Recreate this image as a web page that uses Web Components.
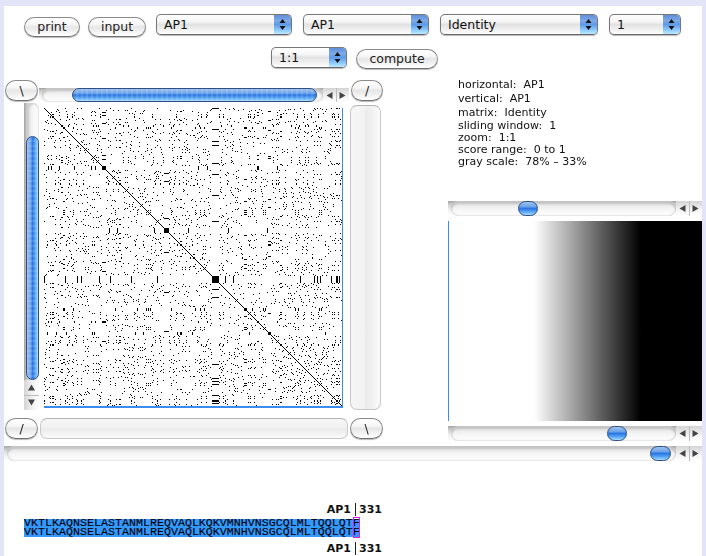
<!DOCTYPE html>
<html>
<head>
<meta charset="utf-8">
<title>Dot plot</title>
<style>
    html, body { margin: 0; height: 100%; overflow: hidden; }
    body { background: #e4e4f8; font-family: "DejaVu Sans", sans-serif; color: #111; }
</style>
</head>
<body>
<dot-app></dot-app>
<script>
class MacButton extends HTMLElement {
    constructor() {
        super();
        this.attachShadow({ mode: 'open' });
        this.shadowRoot.innerHTML = `
            <style>
                :host {
                    display: flex;
                    box-sizing: border-box;
                    align-items: center;
                    justify-content: center;
                    height: 21px;
                    padding-bottom: 1px;
                    border: 1px solid #8a8a8a;
                    border-bottom-color: #6f6f6f;
                    border-radius: 11px;
                    font-size: 12.5px;
                    color: #222;
                    box-shadow: 0 1px 1px #bbb;
                    background: linear-gradient(#fff, #f6f6f6 35%, #e6e6e6 50%, #f2f2f2 75%, #fff);
                    flex: none;
                }
            </style>
            <slot></slot>`;
    }
}

class MacSelect extends HTMLElement {
    constructor() {
        super();
        this.attachShadow({ mode: 'open' });
        this.shadowRoot.innerHTML = `
            <style>
                :host {
                    display: flex;
                    box-sizing: border-box;
                    height: 21px;
                    border: 1px solid #777;
                    border-bottom-color: #666;
                    border-radius: 5px;
                    overflow: hidden;
                    font-size: 12.5px;
                    color: #111;
                    box-shadow: 0 1px 1px #bbb;
                    background: linear-gradient(#fff, #f5f5f5 35%, #e2e2e2 50%, #f2f2f2 80%, #fff);
                    flex: none;
                }
                .label { flex: 1; padding: 0 0 1px 7px; display: flex; align-items: center; }
                .arrows {
                    width: 17px;
                    background: linear-gradient(#5f8fd8, #7ea9e6 30%, #5d9ae8 50%, #9ad4ff 85%, #bfe8ff);
                    display: flex;
                    align-items: center;
                    justify-content: center;
                }
            </style>
            <div class="label"><slot></slot></div>
            <div class="arrows">
                <svg width="7" height="11" viewBox="0 0 7 11"><path d="M3.5 0 6.5 4H.5zM3.5 11 .5 7h6z" fill="#111"/></svg>
            </div>`;
    }
}

class MacScrollbar extends HTMLElement {
    constructor() {
        super();
        this.attachShadow({ mode: 'open' });
    }

    connectedCallback() {
        this.render();
    }

    render() {
        const before = this.getAttribute('before') || 0;
        const size = this.getAttribute('size') || 20;
        const vert = this.getAttribute('orient') === 'v';
        const dir = vert ? 'to right' : 'to bottom';
        // the long thumbs get the faint aqua stripes
        const stripes = size > 40 ? `repeating-linear-gradient(${vert ? 'to bottom' : 'to right'}, transparent 0 3px, rgba(255,255,255,.12) 3px 5px),` : '';
        this.shadowRoot.innerHTML = `
            <style>
                :host {
                    display: flex;
                    box-sizing: border-box;
                    flex-direction: ${vert ? 'column' : 'row'};
                    ${vert ? 'width: 15px;' : 'height: 15px;'}
                    background: linear-gradient(${dir}, #a4a4a4, #cfcfcf 25%, #eee 55%, #fff);
                    flex: none;
                }
                .track {
                    flex: 1;
                    display: flex;
                    flex-direction: ${vert ? 'column' : 'row'};
                    align-items: stretch;
                    min-${vert ? 'height' : 'width'}: 0;
                    ${vert ? 'margin-left: 2px;' : 'margin-left: 3px;'}
                    border-radius: 8px;
                    box-shadow: inset ${vert ? '3px 0 2px #ccc' : '0 3px 2px #c4c4c4'}, inset 0 0 2px #aaa;
                    background: linear-gradient(${dir}, #ddd, #f4f4f4 50%, #fff);
                }
                .gap { flex: none; ${vert ? 'height' : 'width'}: ${before}px; }
                .thumb {
                    flex: none;
                    ${vert ? 'height' : 'width'}: ${size}px;
                    box-sizing: border-box;
                    border: 1px solid #2f4f84;
                    border-radius: 8px;
                    background: ${stripes} linear-gradient(${dir}, #9fc2ee, #6ea4ea 35%, #2a76e2 50%, #5aa6f4 75%, #a6dcff);
                }
                .arrows {
                    flex: none;
                    display: flex;
                    flex-direction: ${vert ? 'column' : 'row'};
                    ${vert ? 'height: 30px;' : 'width: 26px;'}
                }
                .arrow {
                    flex: 1;
                    display: flex;
                    align-items: center;
                    justify-content: center;
                    background: linear-gradient(${dir}, #d4d4d4, #f2f2f2 55%, #fff);
                }
                .arrow + .arrow { ${vert ? 'border-top' : 'border-left'}: 1px solid #bbb; }
            </style>
            <div class="track"><div class="gap"></div><div class="thumb"></div></div>
            <div class="arrows">
                <div class="arrow"><svg width="7" height="7" viewBox="0 0 7 7"><path d="${vert ? 'M3.5 .5 7 6.5H0z' : 'M.5 3.5 6.5 0v7z'}" fill="#444"/></svg></div>
                <div class="arrow"><svg width="7" height="7" viewBox="0 0 7 7"><path d="${vert ? 'M3.5 6.5 0 .5h7z' : 'M6.5 3.5 .5 0v7z'}" fill="#444"/></svg></div>
            </div>`;
    }
}

class MacTrough extends HTMLElement {
    constructor() {
        super();
        this.attachShadow({ mode: 'open' });
        this.shadowRoot.innerHTML = `
            <style>
                :host {
                    display: block;
                    box-sizing: border-box;
                    border: 1px solid #c8c8c8;
                    border-top-color: #b4b4b4;
                    border-radius: 7px;
                    background: linear-gradient(var(--dir, to bottom), #f6f6f6, #f2f2f2 45%, #ebebeb 52%, #fafafa);
                }
            </style>`;
    }
}

class DotPlot extends HTMLElement {
    constructor() {
        super();
        this.attachShadow({ mode: 'open' });
        this.shadowRoot.innerHTML = `
            <style>
                :host { display: block; width: 298px; height: 298px; border-right: 1px solid #3b8cf0; border-bottom: 2px solid #3b8cf0; background: #fff; }
                canvas { display: block; }
            </style>
            <canvas width="298" height="298"></canvas>`;
    }

    connectedCallback() {
        const tail = 'VKTLKAQNSELASTANMLREQVAQLKQKVMNHVNSGCQLMLTQQLQTF';
        // nearly flat composition, Q kept rare so the long Q run stays a single blob
        const letters = 'ACDEFGHIKLMNPRSTVWYAEKLSTQ';
        let seed = 7331;
        const rand = () => {
            seed = (seed + 0x6D2B79F5) | 0;
            let t = Math.imul(seed ^ (seed >>> 15), 1 | seed);
            t = (t + Math.imul(t ^ (t >>> 7), 61 | t)) ^ t;
            return ((t ^ (t >>> 14)) >>> 0) / 4294967296;
        };
        const seq = [];
        for (let i = 0; i < 298 - tail.length; i++) {
            seq.push(letters[Math.floor(rand() * letters.length)]);
        }
        // low complexity stretches give the dark blobs along the diagonal
        const blobs = [[58, 4, 'W'], [120, 5, 'Y'], [168, 7, 'Q'], [224, 3, 'H']];
        blobs.forEach(([at, len, ch]) => {
            for (let i = 0; i < len; i++) seq[at + i] = ch;
        });
        tail.split('').forEach(ch => seq.push(ch));

        const ctx = this.shadowRoot.querySelector('canvas').getContext('2d');
        ctx.fillStyle = '#000';
        for (let y = 0; y < 298; y++) {
            for (let x = 0; x < 298; x++) {
                if (seq[x] === seq[y]) ctx.fillRect(x, y, 1, 1);
            }
        }
    }
}

class GrayRamp extends HTMLElement {
    constructor() {
        super();
        this.attachShadow({ mode: 'open' });
        this.shadowRoot.innerHTML = `
            <style>
                :host {
                    display: block;
                    box-sizing: border-box;
                    height: 200px;
                    border-left: 1px solid #3b8cf0;
                    background: linear-gradient(to right, #fff 0, #fff 85px, #000 192px, #000 100%);
                }
            </style>`;
    }
}

class InfoPanel extends HTMLElement {
    constructor() {
        super();
        this.attachShadow({ mode: 'open' });
        this.shadowRoot.innerHTML = `
            <style>
                :host { display: block; box-sizing: border-box; height: 123px; padding-left: 10px; font-size: 11px; color: #111; }
                div { height: 12px; line-height: 12px; white-space: pre; }
                .wide { height: 14px; line-height: 14px; }
            </style>
            <div class="wide">horizontal:  AP1</div>
            <div class="wide">vertical:  AP1</div>
            <div class="wide">matrix:  Identity</div>
            <div>sliding window:  1</div>
            <div>zoom:  1:1</div>
            <div>score range:  0 to 1</div>
            <div>gray scale:  78% – 33%</div>`;
    }
}

class AlignView extends HTMLElement {
    constructor() {
        super();
        this.attachShadow({ mode: 'open' });
        const seq = 'VKTLKAQNSELASTANMLREQVAQLKQKVMNHVNSGCQLMLTQQLQTF';
        this.shadowRoot.innerHTML = `
            <style>
                :host { display: block; padding: 41px 0 0 20px; }
                .label {
                    display: flex;
                    justify-content: flex-end;
                    align-items: center;
                    width: 358px;
                    height: 14px;
                    font: bold 11px "DejaVu Sans", sans-serif;
                    color: #111;
                }
                .label i { display: block; width: 1px; height: 13px; background: #222; margin: 0 3px 0 4px; }
                .rows {
                    position: relative;
                    width: 336px;
                    margin: 3px 0 4px;
                    font: 11.67px/9px "Liberation Mono", monospace;
                    -webkit-text-stroke: .12px #000;
                    color: #000;
                    background: #3399ff;
                }
                .row { height: 9px; white-space: pre; }
                .cursor {
                    position: absolute;
                    left: 329px;
                    top: -2px;
                    width: 7px;
                    height: 21px;
                    box-sizing: border-box;
                    border: 1px solid #e020e0;
                }
            </style>
            <div class="label">AP1<i></i>331</div>
            <div class="rows">
                <div class="row">${seq}</div>
                <div class="row">${seq}</div>
                <div class="cursor"></div>
            </div>
            <div class="label">AP1<i></i>331</div>`;
    }
}

class DotApp extends HTMLElement {
    constructor() {
        super();
        this.attachShadow({ mode: 'open' });
        this.shadowRoot.innerHTML = `
            <style>
                :host { display: block; margin: 6px 4px 0; height: 550px; background: #fff; }
                .bar { display: flex; align-items: flex-start; }
                .bar1 { padding: 8px 0 0 20px; height: 22px; margin-bottom: 11px; }
                .bar2 { padding-left: 267px; height: 22px; margin-bottom: 9px; }
                .bar mac-button { height: 20px; }
                .main { display: flex; height: 368px; }
                .viewer { width: 444px; padding: 2px 0 0 1px; box-sizing: border-box; }
                .vtop, .vmid, .vbot { display: flex; }
                .vtop { height: 23px; }
                .vtop mac-scrollbar { width: 310px; margin: 8px 2px 0 1px; height: 14px; }
                .vmid { height: 307px; padding-left: 19px; }
                .vmid .plot { margin: 5px 7px 0 5px; }
                .vmid mac-trough { width: 31px; height: 305px; margin-top: 2px; --dir: to right; }
                .vbot { margin-top: 8px; }
                .vbot mac-trough { width: 308px; height: 21px; margin: 0 2px; }
                .side { flex: 1; min-width: 0; }
                .side gray-ramp { margin: 5px 0; }
            </style>
            <div class="bar bar1">
                <mac-button style="width:56px;margin-top:3px;">print</mac-button>
                <mac-button style="width:58px;margin:3px 10px 0 8px;">input</mac-button>
                <mac-select style="width:136px;margin-right:11px;">AP1</mac-select>
                <mac-select style="width:126px;margin-right:11px;">AP1</mac-select>
                <mac-select style="width:158px;margin-right:11px;">Identity</mac-select>
                <mac-select style="width:72px;">1</mac-select>
            </div>
            <div class="bar bar2">
                <mac-select style="width:76px;margin-right:9px;">1:1</mac-select>
                <mac-button style="width:82px;margin-top:2px;">compute</mac-button>
            </div>
            <div class="main">
                <div class="viewer">
                    <div class="vtop">
                        <mac-button style="width:33px;">\\</mac-button>
                        <mac-scrollbar before="30" size="245"></mac-scrollbar>
                        <mac-button style="width:32px;">/</mac-button>
                    </div>
                    <div class="vmid">
                        <mac-scrollbar orient="v" before="33" size="244"></mac-scrollbar>
                        <dot-plot class="plot"></dot-plot>
                        <mac-trough></mac-trough>
                    </div>
                    <div class="vbot">
                        <mac-button style="width:33px;">/</mac-button>
                        <mac-trough></mac-trough>
                        <mac-button style="width:33px;">\\</mac-button>
                    </div>
                </div>
                <div class="side">
                    <info-panel></info-panel>
                    <mac-scrollbar before="67" size="20"></mac-scrollbar>
                    <gray-ramp></gray-ramp>
                    <mac-scrollbar before="156" size="20"></mac-scrollbar>
                </div>
            </div>
            <mac-scrollbar before="643" size="21"></mac-scrollbar>
            <align-view></align-view>`;
    }
}

customElements.define('mac-button', MacButton);
customElements.define('mac-select', MacSelect);
customElements.define('mac-scrollbar', MacScrollbar);
customElements.define('mac-trough', MacTrough);
customElements.define('dot-plot', DotPlot);
customElements.define('gray-ramp', GrayRamp);
customElements.define('info-panel', InfoPanel);
customElements.define('align-view', AlignView);
customElements.define('dot-app', DotApp);
</script>
</body>
</html>
